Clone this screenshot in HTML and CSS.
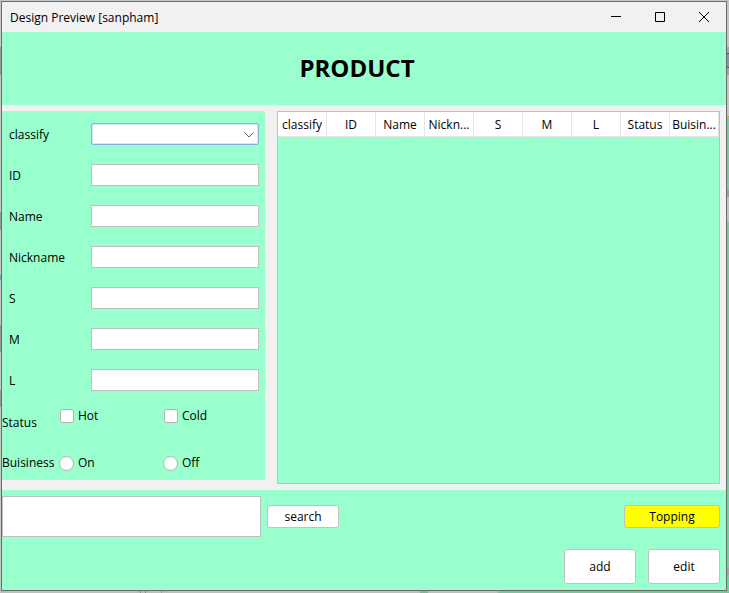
FILE: index.html
```html
<!DOCTYPE html>
<html lang="en">
<head>
<meta charset="utf-8">
<title>Design Preview [sanpham]</title>
<link rel="stylesheet" href="styles.css">
</head>
<body>
<div class="window">
  <header class="titlebar">
    <span class="titlebar-text">Design Preview [sanpham]</span>
    <button class="win-btn" type="button" aria-label="Minimize"><svg width="12" height="12" viewBox="0 0 12 12"><path d="M1 5.5H11"/></svg></button>
    <button class="win-btn" type="button" aria-label="Maximize"><svg width="12" height="12" viewBox="0 0 12 12"><path d="M1.5 1.5H10.500V10.500H1.500Z"/></svg></button>
    <button class="win-btn" type="button" aria-label="Close"><svg width="12" height="12" viewBox="0 0 12 12"><path d="M1 1L11 11M11 1L1 11"/></svg></button>
  </header>
  <div class="banner"><h1>PRODUCT</h1></div>
  <main class="content">
    <form class="form">
      <div class="field"><label for="classify">classify</label>
        <span class="combo"><select id="classify"><option></option></select><svg class="chevron" width="10" height="6" viewBox="0 0 10 6"><path d="M0.500 0.500L5 5L9.500 0.500"/></svg></span></div>
      <div class="field"><label for="pid">ID</label><input id="pid" type="text"></div>
      <div class="field"><label for="name">Name</label><input id="name" type="text"></div>
      <div class="field"><label for="nickname">Nickname</label><input id="nickname" type="text"></div>
      <div class="field"><label for="s">S</label><input id="s" type="text"></div>
      <div class="field"><label for="m">M</label><input id="m" type="text"></div>
      <div class="field"><label for="l">L</label><input id="l" type="text"></div>
      <div class="options options-status" role="group" aria-labelledby="status-label">
        <span class="options-label" id="status-label">Status</span>
        <label class="option"><input type="checkbox">Hot</label>
        <label class="option"><input type="checkbox">Cold</label>
      </div>
      <div class="options" role="group" aria-labelledby="business-label">
        <span class="options-label" id="business-label">Buisiness</span>
        <label class="option"><input type="radio" name="business">On</label>
        <label class="option"><input type="radio" name="business">Off</label>
      </div>
    </form>
    <div class="table-pane">
      <table>
        <thead><tr><th>classify</th><th>ID</th><th>Name</th><th>Nickn...</th><th>S</th><th>M</th><th>L</th><th>Status</th><th>Buisin...</th></tr></thead>
        <tbody></tbody>
      </table>
    </div>
  </main>
  <footer class="actions">
    <div class="row">
      <textarea class="search-box" aria-label="Search text"></textarea>
      <button class="btn" type="button">search</button>
      <button class="btn btn-topping" type="button">Topping</button>
    </div>
    <div class="row row-end">
      <button class="btn btn-tall" type="button">add</button>
      <button class="btn btn-tall" type="button">edit</button>
    </div>
  </footer>
</div>
</body>
</html>
```

FILE: styles.css
```css
* { box-sizing: border-box; }

/* The desktop behind the window shows as thin strips on each side. */
body {
  margin: 0;
  padding: 1px 2px 2px 1px;
  min-height: 100vh;
  display: flex;
  background:
    linear-gradient(90deg, #bdbdbd 140px, #8c8c8c 140px 141px, #bdbdbd 141px 145px, #8c8c8c 145px 146px, #bdbdbd 146px 161px, #c99a3c 161px 162px, #bdbdbd 162px 420px, #78b898 420px 428px, #bdbdbd 428px 498px, #7cc4a0 498px) left bottom / 100% 2px no-repeat,
    linear-gradient(#c8c8c8 47px, #989898 47px 75px, #c8c8c8 75px 212px, #989898 212px 230px, #c8c8c8 230px 275px, #6aa5d8 275px 280px, #c8c8c8 280px 325px, #989898 325px 352px, #c8c8c8 352px 390px, #989898 390px 407px, #c8c8c8 407px) left top / 1px 100% no-repeat,
    linear-gradient(#c4c4c4 47px, #a0a4b0 47px 53px, #4c5468 53px 54px, #8494b0 54px 67px, #4c5468 67px 68px, #a0a4b0 68px 75px, #c8c4c6 75px 116px, #d89a28 116px 117px, #7ccaa2 117px 190px, #a09c9c 190px 197px, #c4c0c2 197px 222px, #7ccaa2 222px 568px, #a8a4a4 568px 575px, #7ccaa2 575px) right top / 2px 100% no-repeat,
    #c8c8c8;
  font: 12px/20px "Open Sans", "Noto Sans", sans-serif;
  color: #000;
}

button, input, select, textarea { font: inherit; color: inherit; margin: 0; }

.window {
  flex: 1;
  min-width: 0;
  display: flex;
  flex-direction: column;
  border: 1px solid #6b6b6b;
  background: #f1f1f1;
}

.titlebar { display: flex; align-items: center; height: 30px; padding-left: 8px; }
.titlebar-text { flex: 1; padding-top: 2px; }
.win-btn {
  width: 44px;
  height: 30px;
  padding: 0;
  border: 0;
  background: none;
  display: flex;
  align-items: center;
  justify-content: center;
}
.win-btn svg, .chevron { fill: none; stroke: #000; }

.banner {
  height: 73px;
  display: flex;
  align-items: center;
  justify-content: center;
  padding: 0 14px 2px 0;
  background: #99ffcc;
}
h1 { margin: 0; font-size: 24px; line-height: 32px; font-weight: 700; }

.content {
  flex: 1;
  display: grid;
  grid-template-columns: 263px 1fr;
  column-gap: 12px;
  padding: 6px;
  padding-left: 0;
}

.form {
  align-self: start;
  display: flex;
  flex-direction: column;
  gap: 19px;
  padding: 12px 6px 8px 0;
  background: #99ffcc;
}
.field {
  display: grid;
  grid-template-columns: 82px 1fr;
  align-items: center;
  height: 22px;
  padding-left: 7px;
}
.field label { padding-top: 2px; }
.field input, .field select {
  width: 100%;
  height: 22px;
  padding: 0 4px;
  border: 1px solid #c0c0c0;
  border-radius: 0;
  background: #fff;
}
.combo { position: relative; height: 22px; }
.field select {
  display: block;
  appearance: none;
  border-color: #89b0e0;
  border-radius: 2px;
  box-shadow: inset 0 0 0 1px #d5e4f7;
}
.chevron { position: absolute; right: 5px; top: 9px; stroke: #666; pointer-events: none; }

.options { display: grid; grid-template-columns: 57px 104px 1fr; line-height: 22px; margin-bottom: -2px; }
.options-status { height: 28px; margin: -5px 0 0; }
.options-status .options-label { align-self: end; line-height: 20px; }
.option { display: flex; align-items: center; align-self: start; gap: 4px; }
.option input {
  appearance: none;
  width: 14px;
  height: 14px;
  margin-left: 1px;
  border: 1px solid #b3b3b3;
  border-radius: 2px;
  background: #fff;
}
.option input[type="radio"] { width: 15px; height: 15px; margin-left: 0; border-radius: 50%; }

.table-pane { border: 1px solid #c0c0c0; background: #99ffcc; }
table { width: 100%; table-layout: fixed; border-collapse: separate; border-spacing: 0; }
th {
  height: 25px;
  padding: 2px 0 0;
  border: solid #e5e5e5;
  border-width: 0 1px 1px 0;
  background: #fff;
  font-weight: 400;
  white-space: nowrap;
}

.actions {
  display: flex;
  flex-direction: column;
  gap: 12px;
  padding: 6px;
  padding-left: 0;
  background: #99ffcc;
}
.row { display: flex; align-items: center; gap: 6px; }
.row-end { justify-content: flex-end; gap: 12px; }
.search-box {
  width: 259px;
  height: 41px;
  padding: 4px;
  border: 1px solid #c0c0c0;
  background: #fff;
  resize: none;
}
.btn {
  width: 72px;
  height: 23px;
  padding: 0;
  border: 1px solid #c2c2c2;
  border-radius: 3px;
  background: #fff;
}
.btn-topping { width: 96px; margin-left: auto; background: #ff0; }
.btn-tall { height: 35px; padding-top: 1px; }
```
